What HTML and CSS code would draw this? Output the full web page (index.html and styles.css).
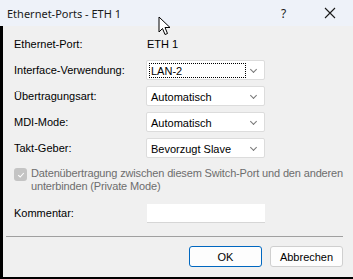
FILE: index.html
```html
<!DOCTYPE html>
<html lang="de">
<head>
    <meta charset="UTF-8">
    <title>Ethernet-Ports - ETH 1</title>
    <link rel="stylesheet" href="styles.css">
</head>
<body>
<div class="window">
    <div class="titlebar">
        <span class="title">Ethernet-Ports - ETH 1</span>
        <span class="help">?</span>
        <span class="close">
            <svg width="12" height="12" viewBox="0 0 12 12"><path d="M1 1L11 11M11 1L1 11" stroke="#1a1a1a" stroke-width="1.1"/></svg>
        </span>
        <svg class="cursor" width="14" height="20" viewBox="0 0 14 20">
            <path d="M1 1V16L4.5 12.5L7 18.5L9.5 17.5L7 11.5H12Z" fill="#fff" stroke="#000" stroke-width="1" stroke-linejoin="round"/>
        </svg>
    </div>
    <div class="client">
        <div class="form">
            <span class="label">Ethernet-Port:</span>
            <span class="value">ETH 1</span>

            <span class="label">Interface-Verwendung:</span>
            <div class="select"><span class="focus">LAN-2</span><i class="chev"></i></div>

            <span class="label">Übertragungsart:</span>
            <div class="select"><span>Automatisch</span><i class="chev"></i></div>

            <span class="label">MDI-Mode:</span>
            <div class="select"><span>Automatisch</span><i class="chev"></i></div>

            <span class="label">Takt-Geber:</span>
            <div class="select"><span>Bevorzugt Slave</span><i class="chev"></i></div>
        </div>

        <div class="check">
            <span class="box">
                <svg width="8" height="8" viewBox="0 0 8 8"><path d="M1.2 4.2L3.2 6L6.8 2" fill="none" stroke="#fff" stroke-width="1.1"/></svg>
            </span>
            <span class="check-text">Datenübertragung zwischen diesem Switch-Port und den anderen<br>unterbinden (Private Mode)</span>
        </div>

        <div class="form comment">
            <span class="label">Kommentar:</span>
            <div class="input"></div>
        </div>

        <div class="sep"></div>

        <div class="buttons">
            <button class="btn primary">OK</button>
            <button class="btn">Abbrechen</button>
        </div>
    </div>
</div>
</body>
</html>
```
FILE: styles.css
```css
*{
    margin: 0;
    padding: 0;
    box-sizing: border-box;
}
body{
    width: 353px;
    height: 279px;
    overflow: hidden;
    background: #f0f0f0;
    font-family: "Liberation Sans", Arial, sans-serif;
    font-size: 11px;
    color: #000;
}
.window{
    height: 279px;
    display: flex;
    flex-direction: column;
}
.titlebar{
    height: 26px;
    background: #eef2f9;
    display: flex;
    align-items: center;
    position: relative;
    flex-shrink: 0;
}
.title{
    font-family: "Noto Sans", "Open Sans", sans-serif;
    font-size: 11px;
    padding-left: 7px;
    padding-top: 1px;
    color: #1a1a1a;
    flex: 1;
}
.help{
    font-family: "Noto Sans", sans-serif;
    font-size: 12px;
    width: 14px;
    margin-right: 29px;
    color: #1a1a1a;
}
.close{
    width: 12px;
    height: 12px;
    margin-right: 17px;
    display: flex;
}
.cursor{
    position: absolute;
    left: 158px;
    top: 16px;
}
.client{
    flex: 1;
    border-left: 3px solid #000;
    border-bottom: 2px solid #000;
    padding: 8px 0 0 11px;
    display: flex;
    flex-direction: column;
}
.form{
    display: grid;
    grid-template-columns: 132px 119px;
    grid-auto-rows: 20px;
    row-gap: 6px;
    align-items: center;
}
.value{
    padding-left: 1px;
}
.select{
    height: 20px;
    background: #fff;
    border: 1px solid #dcdcdc;
    border-radius: 2px;
    display: flex;
    align-items: center;
    padding-left: 2px;
    position: relative;
}
.select span{
    flex: 1;
    padding: 1px 2px 0;
}
.select .focus{
    flex: 0 0 97px;
    height: 15px;
    border: 1px dotted #000;
    line-height: 12px;
    padding-left: 1px;
}
.chev{
    position: absolute;
    right: 8px;
    top: 6px;
    width: 5px;
    height: 5px;
    border-right: 1px solid #777;
    border-bottom: 1px solid #777;
    transform: rotate(45deg);
}
.check{
    display: flex;
    margin-top: 9px;
    color: #6d6d6d;
    line-height: 13px;
}
.box{
    width: 13px;
    height: 13px;
    border-radius: 3px;
    background: #c4c4c4;
    display: flex;
    align-items: center;
    justify-content: center;
    margin: 1px 4px 0 0;
    flex-shrink: 0;
}
.check-text{
    white-space: nowrap;
    letter-spacing: -0.15px;
}
.comment{
    margin-top: 10px;
}
.input{
    height: 19px;
    background: #fff;
    border-bottom: 1px solid #d6d6d6;
    margin-left: 1px;
}
.sep{
    height: 1px;
    background: #a0a0a0;
    margin: 13px 10px 0 -8px;
}
.buttons{
    display: flex;
    justify-content: flex-end;
    gap: 8px;
    margin: 9px 10px 0 0;
}
.btn{
    width: 73px;
    height: 21px;
    border: 1px solid #cfcfcf;
    border-radius: 3px;
    background: #fdfdfd;
    font-family: "Liberation Sans", Arial, sans-serif;
    font-size: 11px;
    color: #000;
}
.primary{
    border-color: #0067c0;
}
```
